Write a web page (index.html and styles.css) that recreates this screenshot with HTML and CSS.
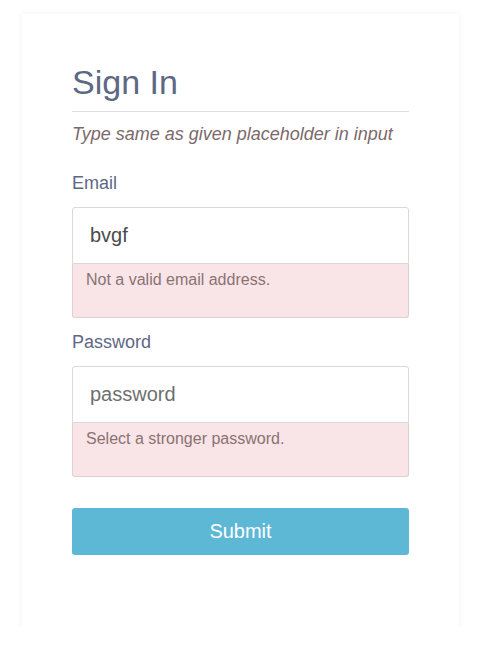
FILE: index.html
```html
<!DOCTYPE html>
<html lang="en">
<head>
<meta charset="utf-8">
<title>Sign In</title>
<link rel="stylesheet" href="styles.css">
</head>
<body>
<div class="card">
  <h1 class="title">Sign In</h1>
  <p class="hint">Type same as given placeholder in input</p>
  <form class="form">
    <div class="group">
      <label class="label" for="email">Email</label>
      <div class="field">
        <input class="input" id="email" type="text" value="bvgf">
        <div class="error">Not a valid email address.</div>
      </div>
    </div>
    <div class="group">
      <label class="label" for="password">Password</label>
      <div class="field">
        <input class="input" id="password" type="text" placeholder="password">
        <div class="error">Select a stronger password.</div>
      </div>
    </div>
    <button class="submit" type="button">Submit</button>
  </form>
</div>
</body>
</html>
```

FILE: styles.css
```css
html, body {
  margin: 0;
  padding: 0;
  background: #ffffff;
  font-family: "Liberation Sans", Arial, sans-serif;
}

.card {
  box-sizing: border-box;
  width: 437px;
  margin: 14px 0 0 22px;
  padding: 50px 50px 72px;
  background: #fff;
  box-shadow: 0 0 6px rgba(0, 0, 0, 0.06);
}

.title {
  margin: 0;
  font-size: 34px;
  font-weight: normal;
  line-height: 36px;
  color: #5d6885;
  padding-bottom: 11px;
  border-bottom: 1px solid #dedede;
}

.hint {
  margin: 11px 0 0;
  font-size: 18px;
  line-height: 22px;
  font-style: italic;
  color: #7b6a6b;
}

.form {
  display: flex;
  flex-direction: column;
  margin-top: 27px;
}

.group {
  display: flex;
  flex-direction: column;
  margin-bottom: 13px;
}

.label {
  font-size: 18px;
  line-height: 22px;
  color: #5d6885;
  margin-bottom: 13px;
}

.field {
  display: flex;
  flex-direction: column;
}

.input {
  box-sizing: border-box;
  height: 57px;
  margin: 0;
  padding: 0 17px;
  border: 1px solid #d9d9d9;
  border-radius: 3px 3px 0 0;
  font-family: "Liberation Sans", Arial, sans-serif;
  font-size: 20px;
  color: #4a4a4a;
  background: #fff;
  outline: none;
}

.input::placeholder {
  color: #6f6f6f;
}

.error {
  box-sizing: border-box;
  height: 54px;
  padding: 6px 13px 0;
  font-size: 16px;
  line-height: 20px;
  color: #8a7273;
  background: #f9e5e7;
  border: 1px solid #e2cfd1;
  border-top: none;
  border-radius: 0 0 3px 3px;
}

.submit {
  margin-top: 18px;
  height: 47px;
  border: none;
  border-radius: 3px;
  background: #5db8d6;
  color: #ffffff;
  font-family: "Liberation Sans", Arial, sans-serif;
  font-size: 20px;
  cursor: pointer;
}
```
